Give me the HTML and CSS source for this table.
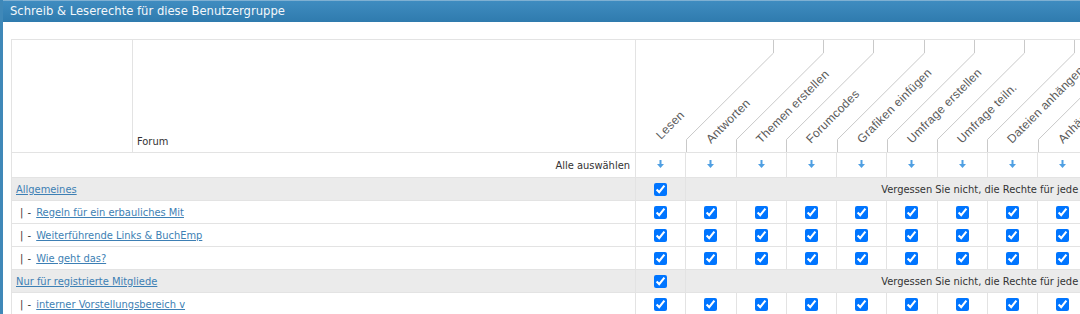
FILE: index.html
```html
<!DOCTYPE html>
<html lang="de">
<head>
<meta charset="utf-8">
<title>Schreib &amp; Leserechte</title>
<link rel="stylesheet" href="styles.css">
</head>
<body>
<div class="panel">
  <div class="panel-title">Schreib &amp; Leserechte für diese Benutzergruppe</div>
  <div class="panel-body">
    <table class="perm">
      <colgroup>
        <col class="c-tree"><col class="c-forum">
        <col class="c-p"><col class="c-p"><col class="c-p"><col class="c-p"><col class="c-p"><col class="c-p">
        <col class="c-p"><col class="c-p"><col class="c-p"><col class="c-p"><col class="c-p"><col class="c-p">
      </colgroup>
      <thead>
        <tr class="head">
          <th class="blank"></th>
          <th class="forum">Forum</th>
          <th class="p"><div class="hd"><span class="lbl">Lesen</span></div></th>
          <th class="p"><div class="hd"><svg class="slant" width="92" height="112" viewBox="0 0 92 112"><path d="M0.5 112V99.5L87.5 13V0"/></svg><span class="lbl">Antworten</span></div></th>
          <th class="p"><div class="hd"><svg class="slant" width="92" height="112" viewBox="0 0 92 112"><path d="M0.5 112V99.5L87.5 13V0"/></svg><span class="lbl">Themen erstellen</span></div></th>
          <th class="p"><div class="hd"><svg class="slant" width="92" height="112" viewBox="0 0 92 112"><path d="M0.5 112V99.5L87.5 13V0"/></svg><span class="lbl">Forumcodes</span></div></th>
          <th class="p"><div class="hd"><svg class="slant" width="92" height="112" viewBox="0 0 92 112"><path d="M0.5 112V99.5L87.5 13V0"/></svg><span class="lbl">Grafiken einfügen</span></div></th>
          <th class="p"><div class="hd"><svg class="slant" width="92" height="112" viewBox="0 0 92 112"><path d="M0.5 112V99.5L87.5 13V0"/></svg><span class="lbl">Umfrage erstellen</span></div></th>
          <th class="p"><div class="hd"><svg class="slant" width="92" height="112" viewBox="0 0 92 112"><path d="M0.5 112V99.5L87.5 13V0"/></svg><span class="lbl">Umfrage teiln.</span></div></th>
          <th class="p"><div class="hd"><svg class="slant" width="92" height="112" viewBox="0 0 92 112"><path d="M0.5 112V99.5L87.5 13V0"/></svg><span class="lbl">Dateien anhängen</span></div></th>
          <th class="p"><div class="hd"><svg class="slant" width="92" height="112" viewBox="0 0 92 112"><path d="M0.5 112V99.5L87.5 13V0"/></svg><span class="lbl">Anhänge</span></div></th>
          <th class="p"><div class="hd"><svg class="slant" width="92" height="112" viewBox="0 0 92 112"><path d="M0.5 112V99.5L87.5 13V0"/></svg><span class="lbl"></span></div></th>
          <th class="p"><div class="hd"><svg class="slant" width="92" height="112" viewBox="0 0 92 112"><path d="M0.5 112V99.5L87.5 13V0"/></svg><span class="lbl"></span></div></th>
          <th class="p"><div class="hd"><svg class="slant" width="92" height="112" viewBox="0 0 92 112"><path d="M0.5 112V99.5L87.5 13V0"/></svg><span class="lbl"></span></div></th>
        </tr>
      </thead>
      <tbody>
        <tr class="all">
          <td colspan="2" class="all-label">Alle auswählen</td>
          <td class="c"><svg class="arr" width="7" height="8" viewBox="0 0 7 8"><path d="M2.5 0h2v4h2.5L3.5 8 0 4h2.5z"/></svg></td>
          <td class="c"><svg class="arr" width="7" height="8" viewBox="0 0 7 8"><path d="M2.5 0h2v4h2.5L3.5 8 0 4h2.5z"/></svg></td>
          <td class="c"><svg class="arr" width="7" height="8" viewBox="0 0 7 8"><path d="M2.5 0h2v4h2.5L3.5 8 0 4h2.5z"/></svg></td>
          <td class="c"><svg class="arr" width="7" height="8" viewBox="0 0 7 8"><path d="M2.5 0h2v4h2.5L3.5 8 0 4h2.5z"/></svg></td>
          <td class="c"><svg class="arr" width="7" height="8" viewBox="0 0 7 8"><path d="M2.5 0h2v4h2.5L3.5 8 0 4h2.5z"/></svg></td>
          <td class="c"><svg class="arr" width="7" height="8" viewBox="0 0 7 8"><path d="M2.5 0h2v4h2.5L3.5 8 0 4h2.5z"/></svg></td>
          <td class="c"><svg class="arr" width="7" height="8" viewBox="0 0 7 8"><path d="M2.5 0h2v4h2.5L3.5 8 0 4h2.5z"/></svg></td>
          <td class="c"><svg class="arr" width="7" height="8" viewBox="0 0 7 8"><path d="M2.5 0h2v4h2.5L3.5 8 0 4h2.5z"/></svg></td>
          <td class="c"><svg class="arr" width="7" height="8" viewBox="0 0 7 8"><path d="M2.5 0h2v4h2.5L3.5 8 0 4h2.5z"/></svg></td>
          <td class="c"><svg class="arr" width="7" height="8" viewBox="0 0 7 8"><path d="M2.5 0h2v4h2.5L3.5 8 0 4h2.5z"/></svg></td>
          <td class="c"><svg class="arr" width="7" height="8" viewBox="0 0 7 8"><path d="M2.5 0h2v4h2.5L3.5 8 0 4h2.5z"/></svg></td>
          <td class="c"><svg class="arr" width="7" height="8" viewBox="0 0 7 8"><path d="M2.5 0h2v4h2.5L3.5 8 0 4h2.5z"/></svg></td>
        </tr>
        <tr class="cat">
          <td colspan="2" class="name"><a href="#">Allgemeines</a></td>
          <td class="c"><input type="checkbox" checked></td>
          <td colspan="11" class="note">Vergessen Sie nicht, die Rechte für jede</td>
        </tr>
        <tr>
          <td colspan="2" class="name"><span class="tree">| - </span><a href="#">Regeln für ein erbauliches Mit</a></td>
          <td class="c"><input type="checkbox" checked></td><td class="c"><input type="checkbox" checked></td><td class="c"><input type="checkbox" checked></td><td class="c"><input type="checkbox" checked></td><td class="c"><input type="checkbox" checked></td><td class="c"><input type="checkbox" checked></td><td class="c"><input type="checkbox" checked></td><td class="c"><input type="checkbox" checked></td><td class="c"><input type="checkbox" checked></td><td class="c"><input type="checkbox" checked></td><td class="c"><input type="checkbox" checked></td><td class="c"><input type="checkbox" checked></td>
        </tr>
        <tr>
          <td colspan="2" class="name"><span class="tree">| - </span><a href="#">Weiterführende Links &amp; BuchEmp</a></td>
          <td class="c"><input type="checkbox" checked></td><td class="c"><input type="checkbox" checked></td><td class="c"><input type="checkbox" checked></td><td class="c"><input type="checkbox" checked></td><td class="c"><input type="checkbox" checked></td><td class="c"><input type="checkbox" checked></td><td class="c"><input type="checkbox" checked></td><td class="c"><input type="checkbox" checked></td><td class="c"><input type="checkbox" checked></td><td class="c"><input type="checkbox" checked></td><td class="c"><input type="checkbox" checked></td><td class="c"><input type="checkbox" checked></td>
        </tr>
        <tr>
          <td colspan="2" class="name"><span class="tree">| - </span><a href="#">Wie geht das?</a></td>
          <td class="c"><input type="checkbox" checked></td><td class="c"><input type="checkbox" checked></td><td class="c"><input type="checkbox" checked></td><td class="c"><input type="checkbox" checked></td><td class="c"><input type="checkbox" checked></td><td class="c"><input type="checkbox" checked></td><td class="c"><input type="checkbox" checked></td><td class="c"><input type="checkbox" checked></td><td class="c"><input type="checkbox" checked></td><td class="c"><input type="checkbox" checked></td><td class="c"><input type="checkbox" checked></td><td class="c"><input type="checkbox" checked></td>
        </tr>
        <tr class="cat">
          <td colspan="2" class="name"><a href="#">Nur für registrierte Mitgliede</a></td>
          <td class="c"><input type="checkbox" checked></td>
          <td colspan="11" class="note">Vergessen Sie nicht, die Rechte für jede</td>
        </tr>
        <tr>
          <td colspan="2" class="name"><span class="tree">| - </span><a href="#">interner Vorstellungsbereich v</a></td>
          <td class="c"><input type="checkbox" checked></td><td class="c"><input type="checkbox" checked></td><td class="c"><input type="checkbox" checked></td><td class="c"><input type="checkbox" checked></td><td class="c"><input type="checkbox" checked></td><td class="c"><input type="checkbox" checked></td><td class="c"><input type="checkbox" checked></td><td class="c"><input type="checkbox" checked></td><td class="c"><input type="checkbox" checked></td><td class="c"><input type="checkbox" checked></td><td class="c"><input type="checkbox" checked></td><td class="c"><input type="checkbox" checked></td>
        </tr>
      </tbody>
    </table>
  </div>
</div>
</body>
</html>
```
FILE: styles.css
```css
html, body {
  margin: 0;
  padding: 0;
  background: #fff;
}
body {
  overflow: hidden;
  font-family: "DejaVu Sans Condensed", "DejaVu Sans", Tahoma, sans-serif;
  font-stretch: condensed;
  font-size: 11px;
  color: #333;
}
.panel {
  width: 1300px;
  min-height: 314px;
  border-left: 3px solid #3f88b8;
}
.panel-title {
  height: 22px;
  box-sizing: border-box;
  padding-left: 7px;
  line-height: 21px;
  font-family: "DejaVu Sans", Verdana, sans-serif;
  font-stretch: normal;
  font-size: 11.6px;
  color: #f3f7fa;
  background: linear-gradient(#3f8cc0, #2f7bae);
  border-top: 1px solid #7fb0d2;
}
.panel-body {
  padding: 17px 0 0 8px;
}
table.perm {
  border-collapse: collapse;
  table-layout: fixed;
  width: 1227px;
}
col.c-tree { width: 121px; }
col.c-forum { width: 503px; }
col.c-p { width: 50.25px; }

.perm th, .perm td {
  border: 1px solid #e3e3e3;
  padding: 0;
  height: 22px;
  font-weight: normal;
}
.perm th.blank,
.perm th.forum {
  height: 108px;
  border: 1px solid #e3e3e3;
}
.perm th.forum {
  text-align: left;
  vertical-align: bottom;
  padding: 0 4px 4px 4px;
}
.perm th.p {
  height: 108px;
  border-left: none;
  border-right: none;
  vertical-align: top;
}
.hd {
  display: grid;
  grid-template-columns: minmax(0, 1fr);
  height: 108px;
}
.slant {
  grid-area: 1 / 1;
  align-self: start;
  justify-self: start;
  overflow: visible;
  fill: none;
  stroke: #c9c9c9;
  stroke-width: 1;
}
.lbl {
  grid-area: 1 / 1;
  align-self: end;
  justify-self: start;
  margin: 0 0 6px 27px;
  white-space: nowrap;
  line-height: 14px;
  transform: rotate(-45deg);
  transform-origin: 0 100%;
  font-family: "Liberation Sans", Arial, sans-serif;
  font-stretch: normal;
  font-size: 12px;
  letter-spacing: 0.3px;
  color: #5a5a5a;
}
.all-label {
  text-align: right;
  padding-right: 5px !important;
  height: 24px !important;
}
.c {
  text-align: center;
  vertical-align: middle;
}
.arr {
  display: block;
  margin: 0 auto 2px;
  fill: #4f9fe2;
}
.c input {
  margin: 0;
  vertical-align: middle;
}
tr.cat td {
  background: #ebebeb;
}
.name {
  padding-left: 4px !important;
  white-space: nowrap;
  overflow: hidden;
}
.tree {
  margin-left: 4px;
  margin-right: 1px;
  word-spacing: 1px;
  color: #333;
}
.name a {
  color: #3d7fb4;
  text-decoration: underline;
}
.note {
  padding-left: 195px !important;
  white-space: nowrap;
  overflow: hidden;
}
```
